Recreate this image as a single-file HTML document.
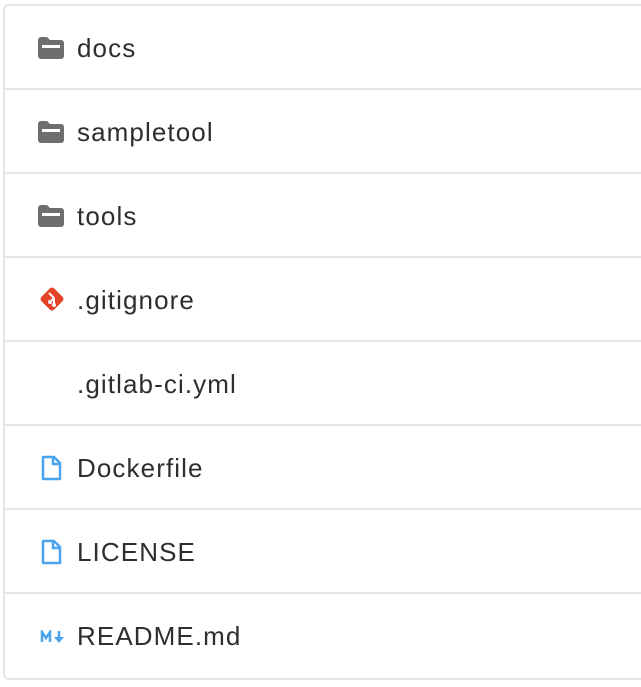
<!DOCTYPE html>
<html><head><style>
body{margin:0;background:#fff;width:641px;height:687px;overflow:hidden;font-family:"Liberation Sans",sans-serif;}
.box{position:absolute;left:3px;top:4px;width:660px;height:672px;border:2px solid #e5e5e5;border-radius:6px;box-sizing:content-box;}
.row{height:82px;border-bottom:2px solid #e5e5e5;position:relative;}
.row:last-child{border-bottom:none;}
.row span{position:absolute;left:72px;top:27px;font-size:26px;letter-spacing:1.1px;color:#2e2e2e;line-height:30px;}
.row svg{position:absolute;left:33px;top:31px;}
</style></head><body>
<div class="box">
<div class="row"><svg width="26" height="22" viewBox="0 0 26 22"><path d="M0 3a3 3 0 0 1 3-3h6l3 3h11a3 3 0 0 1 3 3v13a3 3 0 0 1-3 3H3a3 3 0 0 1-3-3z" fill="#6e6e6e"/><rect x="4" y="8" width="18" height="3" fill="#fff"/></svg><span>docs</span></div>
<div class="row"><svg width="26" height="22" viewBox="0 0 26 22"><path d="M0 3a3 3 0 0 1 3-3h6l3 3h11a3 3 0 0 1 3 3v13a3 3 0 0 1-3 3H3a3 3 0 0 1-3-3z" fill="#6e6e6e"/><rect x="4" y="8" width="18" height="3" fill="#fff"/></svg><span>sampletool</span></div>
<div class="row"><svg width="26" height="22" viewBox="0 0 26 22"><path d="M0 3a3 3 0 0 1 3-3h6l3 3h11a3 3 0 0 1 3 3v13a3 3 0 0 1-3 3H3a3 3 0 0 1-3-3z" fill="#6e6e6e"/><rect x="4" y="8" width="18" height="3" fill="#fff"/></svg><span>tools</span></div>
<div class="row"><svg width="28" height="28" viewBox="0 0 28 28" style="top:27px"><rect x="5" y="5" width="18" height="18" rx="3" transform="rotate(45 14 14)" fill="#e24329"/><path d="M11 8l5 5M16 13v7M16 13l-4 4" stroke="#fff" stroke-width="2"/><circle cx="16" cy="20" r="2" fill="#fff"/><circle cx="12" cy="17" r="2" fill="#fff"/></svg><span>.gitignore</span></div>
<div class="row"><span>.gitlab-ci.yml</span></div>
<div class="row"><svg width="22" height="26" viewBox="0 0 22 26" style="left:36px;top:29px"><path d="M2 2h11l6 6v16H2z" fill="none" stroke="#4aa4ee" stroke-width="2.5" stroke-linejoin="round"/><path d="M12 2v7h7" fill="none" stroke="#4aa4ee" stroke-width="2.5"/></svg><span>Dockerfile</span></div>
<div class="row"><svg width="22" height="26" viewBox="0 0 22 26" style="left:36px;top:29px"><path d="M2 2h11l6 6v16H2z" fill="none" stroke="#4aa4ee" stroke-width="2.5" stroke-linejoin="round"/><path d="M12 2v7h7" fill="none" stroke="#4aa4ee" stroke-width="2.5"/></svg><span>LICENSE</span></div>
<div class="row"><svg width="26" height="14" viewBox="0 0 26 14" style="left:35px;top:36px"><path d="M2 12V2l4 6 4-6v10" fill="none" stroke="#4aa4ee" stroke-width="2.5"/><path d="M19 1v7" stroke="#4aa4ee" stroke-width="2.5"/><path d="M14 7h10l-5 6z" fill="#4aa4ee"/></svg><span>README.md</span></div>
</div>
</body></html>
